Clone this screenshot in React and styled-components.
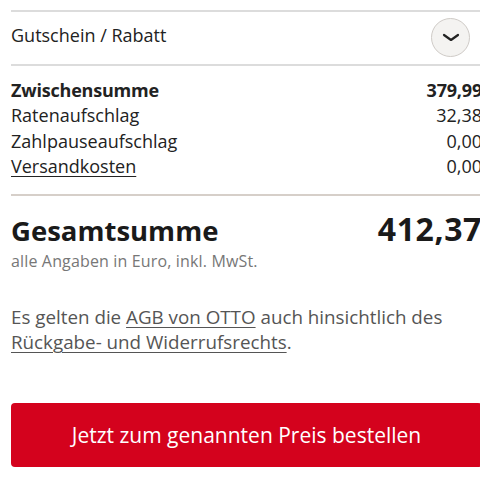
import React from 'react';
import styled, { createGlobalStyle } from 'styled-components';

const GlobalStyle = createGlobalStyle`
  html, body {
    margin: 0;
    padding: 0;
    background: #fff;
    overflow: hidden;
  }
  body {
    font-family: "Open Sans", Lato, sans-serif;
    color: #222;
  }
`;

const Page = styled.div`
  width: 471px;
  margin-left: 11px;
  padding-top: 10px;
`;

const Divider = styled.hr`
  margin: 0;
  border: none;
  height: 2px;
  background: ${(p) => (p.thick ? '#d6cfc9' : '#dcdcdc')};
`;

const Accordion = styled.div`
  display: flex;
  align-items: center;
  justify-content: space-between;
  height: 52px;
`;

const AccordionLabel = styled.span`
  font-size: 18px;
  line-height: 22px;
  margin-top: -6px;
  color: #222;
`;

const ToggleButton = styled.button`
  width: 39px;
  height: 39px;
  margin-top: -2px;
  border-radius: 50%;
  border: 1px solid #cfcbc7;
  background: #f4f3f1;
  display: flex;
  align-items: center;
  justify-content: center;
  padding: 0;
  margin-right: 12px;
`;

const Summary = styled.div`
  padding: 12px 0 15px;
`;

const Row = styled.div`
  display: flex;
  justify-content: space-between;
  font-size: 18px;
  line-height: 25.3px;
  font-weight: ${(p) => (p.bold ? 700 : 400)};
  letter-spacing: ${(p) => (p.bold ? '-0.2px' : '0')};
`;

const LinkText = styled.span`
  text-decoration: underline;
  text-underline-offset: 3px;
  text-decoration-thickness: 1px;
`;

const Total = styled.div`
  padding-top: 11px;
`;

const TotalRow = styled.div`
  display: flex;
  justify-content: space-between;
  align-items: baseline;
`;

const TotalLabel = styled.span`
  font-size: 27.5px;
  font-weight: 700;
  color: #1a1a1a;
`;

const TotalValue = styled.span`
  font-size: 32px;
  font-weight: 700;
  letter-spacing: 0.6px;
  color: #1a1a1a;
`;

const Note = styled.div`
  font-size: 16px;
  letter-spacing: 0.15px;
  color: #777;
  margin-top: 0;
`;

const Terms = styled.p`
  margin: 33px 0 0;
  font-size: 18.8px;
  line-height: 25px;
  color: #555;
`;

const TermsLink = styled.a`
  color: #555;
  text-decoration: underline;
  text-underline-offset: 3px;
  text-decoration-thickness: 1px;
`;

const OrderButton = styled.button`
  display: block;
  width: 100%;
  height: 64px;
  margin-top: 48px;
  border: none;
  border-radius: 4px;
  background: #d4021d;
  color: #fff;
  font-family: inherit;
  font-size: 21px;
`;

function Chevron() {
  return (
    <svg width="18" height="9" viewBox="0 0 18 9" fill="none">
      <path d="M2 2l7 5 7-5" stroke="#222" strokeWidth="2.2" strokeLinecap="round" strokeLinejoin="round" />
    </svg>
  );
}

const rows = [
  { label: 'Zwischensumme', value: '379,99', bold: true },
  { label: 'Ratenaufschlag', value: '32,38' },
  { label: 'Zahlpauseaufschlag', value: '0,00' },
  { label: 'Versandkosten', value: '0,00', link: true },
];

export default function App() {
  return (
    <>
      <GlobalStyle />
      <Page>
        <Divider />
        <Accordion>
          <AccordionLabel>Gutschein / Rabatt</AccordionLabel>
          <ToggleButton aria-label="Gutschein öffnen">
            <Chevron />
          </ToggleButton>
        </Accordion>
        <Divider />
        <Summary>
          {rows.map((r) => (
            <Row key={r.label} bold={r.bold}>
              <span>{r.link ? <LinkText>{r.label}</LinkText> : r.label}</span>
              <span>{r.value}</span>
            </Row>
          ))}
        </Summary>
        <Divider thick />
        <Total>
          <TotalRow>
            <TotalLabel>Gesamtsumme</TotalLabel>
            <TotalValue>412,37</TotalValue>
          </TotalRow>
          <Note>alle Angaben in Euro, inkl. MwSt.</Note>
        </Total>
        <Terms>
          Es gelten die <TermsLink href="#">AGB von OTTO</TermsLink> auch hinsichtlich des{' '}
          <TermsLink href="#">Rückgabe- und Widerrufsrechts</TermsLink>.
        </Terms>
        <OrderButton>Jetzt zum genannten Preis bestellen</OrderButton>
      </Page>
    </>
  );
}
